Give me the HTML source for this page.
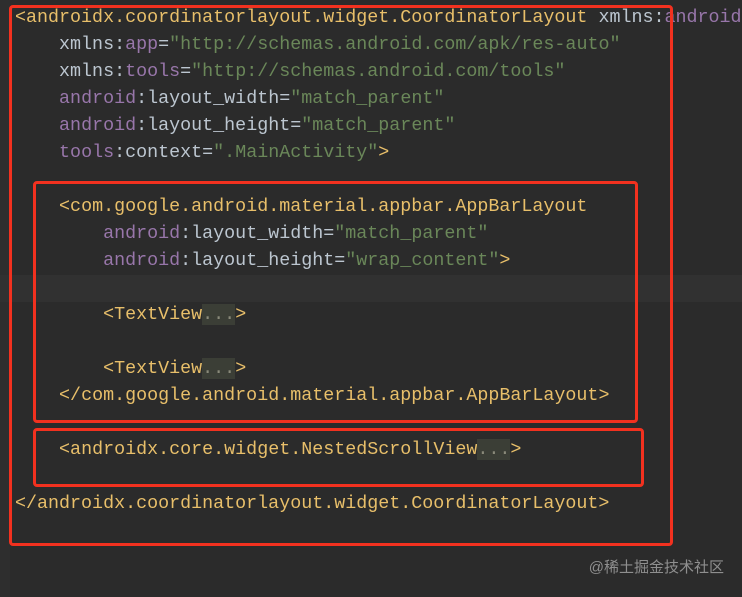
<!DOCTYPE html>
<html><head><meta charset="utf-8"><style>
body{margin:0;width:742px;height:597px;background:#2b2b2b;overflow:hidden;position:relative;font-family:"Liberation Mono",monospace;}
.code{position:absolute;left:15px;top:4px;font-size:18.35px;line-height:27px;white-space:pre;color:#bcc6d0;}
.t{color:#e8bf6a}.n{color:#9876aa}.s{color:#6a8759}
.f{background:#3b3e36;color:#8a8a7a}
.box{position:absolute;border:3px solid #f2311f;border-radius:4px;}
.hl{position:absolute;left:0;top:275px;width:742px;height:27px;background:#313131;}
.wm{position:absolute;right:18px;bottom:20px;font-family:"Liberation Sans","Noto Sans CJK SC",sans-serif;font-size:15px;color:#8f8f8f;}
.gut{position:absolute;left:0;top:0;width:10px;height:597px;background:#2e2e2e;}
</style></head><body>
<div class="gut"></div>
<div class="hl"></div>
<div class="code"><span class="t">&lt;androidx.coordinatorlayout.widget.CoordinatorLayout </span>xmlns:<span class="n">android</span>
    xmlns:<span class="n">app</span>=<span class="s">"http://schemas.android.com/apk/res-auto"</span>
    xmlns:<span class="n">tools</span>=<span class="s">"http://schemas.android.com/tools"</span>
    <span class="n">android</span>:layout_width=<span class="s">"match_parent"</span>
    <span class="n">android</span>:layout_height=<span class="s">"match_parent"</span>
    <span class="n">tools</span>:context=<span class="s">".MainActivity"</span><span class="t">&gt;</span>

    <span class="t">&lt;com.google.android.material.appbar.AppBarLayout</span>
        <span class="n">android</span>:layout_width=<span class="s">"match_parent"</span>
        <span class="n">android</span>:layout_height=<span class="s">"wrap_content"</span><span class="t">&gt;</span>

        <span class="t">&lt;TextView</span><span class="f">...</span><span class="t">&gt;</span>

        <span class="t">&lt;TextView</span><span class="f">...</span><span class="t">&gt;</span>
    <span class="t">&lt;/com.google.android.material.appbar.AppBarLayout&gt;</span>

    <span class="t">&lt;androidx.core.widget.NestedScrollView</span><span class="f">...</span><span class="t">&gt;</span>

<span class="t">&lt;/androidx.coordinatorlayout.widget.CoordinatorLayout&gt;</span></div>
<div class="box" style="left:9px;top:5px;width:658px;height:535px"></div>
<div class="box" style="left:33px;top:181px;width:599px;height:236px"></div>
<div class="box" style="left:33px;top:428px;width:605px;height:53px"></div>
<div class="wm">@稀土掘金技术社区</div>
</body></html>
